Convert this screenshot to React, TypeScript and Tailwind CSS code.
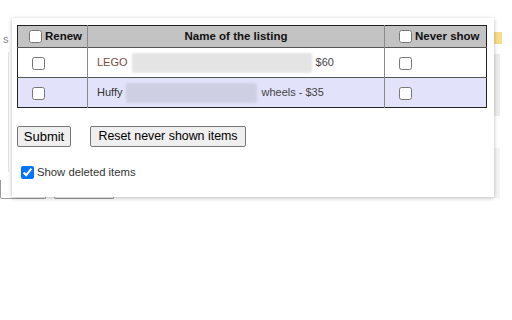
import React from 'react';

type Listing = {
  id: number;
  prefix: string;
  prefixColor: string;
  blurWidth: number;
  blurColor: string;
  suffix: string;
  tint: string;
};

const listings: Listing[] = [
  {
    id: 1,
    prefix: 'LEGO',
    prefixColor: 'text-[#7b4b3f]',
    blurWidth: 180,
    blurColor: 'bg-[#e4e4e4]',
    suffix: '$60',
    tint: 'bg-white',
  },
  {
    id: 2,
    prefix: 'Huffy',
    prefixColor: 'text-[#333333]',
    blurWidth: 131,
    blurColor: 'bg-[#cfcfe3]',
    suffix: 'wheels - $35',
    tint: 'bg-[#e2e2fa]',
  },
];

function Box({ checked = false }: { checked?: boolean }) {
  return (
    <input
      type="checkbox"
      defaultChecked={checked}
      className="m-0 h-[13px] w-[13px] shrink-0 align-middle accent-[#0075ff]"
    />
  );
}

// page behind the popup, only edges of it peek out
function Backdrop() {
  return (
    <>
      <span className="absolute left-[3px] top-[31px] text-[11px] text-[#888]">s</span>
      <div className="absolute left-[8px] top-[52px] h-[120px] w-px bg-[#e2e2e2]" />
      <div className="absolute left-0 top-[180px] h-[19px] w-[46px] rounded-b-[2px] border border-t-0 border-[#9a9a9a]" />
      <div className="absolute left-[54px] top-[180px] h-[19px] w-[60px] rounded-b-[2px] border border-t-0 border-[#9a9a9a]" />
      <div className="absolute left-[494px] top-[32px] h-[12px] w-[8px] bg-[#f7dc8a]" />
      <div className="absolute left-[494px] top-[54px] h-[62px] w-[6px] bg-[#ececec]" />
      <div className="absolute left-[494px] top-[148px] h-[50px] w-[6px] bg-[#f4f4f4]" />
    </>
  );
}

export default function App() {
  return (
    <div className="relative h-[320px] w-[512px] overflow-hidden bg-white font-['Liberation_Sans',Arial,sans-serif]">
      <Backdrop />

      <div className="absolute left-[12px] top-[18px] w-[482px] bg-white px-[5px] pb-[16px] pt-[7px] shadow-[0_1px_4px_rgba(0,0,0,0.28)]">
        <table className="w-[470px] table-fixed border-collapse border border-[#222] text-[11px]">
          <thead>
            <tr className="h-[22px] bg-[#c3c3c3] text-[11.5px] text-[#111]">
              <th className="w-[70px] border-r border-[#8a8a8a] p-0 text-left font-bold">
                <span className="flex items-center gap-[3px] whitespace-nowrap pl-[11px]">
                  <Box />
                  Renew
                </span>
              </th>
              <th className="border-r border-[#8a8a8a] p-0 text-center font-bold">Name of the listing</th>
              <th className="w-[102px] p-0 text-left font-bold">
                <span className="flex items-center gap-[3px] whitespace-nowrap pl-[14px]">
                  <Box />
                  Never show
                </span>
              </th>
            </tr>
          </thead>
          <tbody>
            {listings.map((l) => (
              <tr key={l.id} className={`border-t border-[#555] ${l.tint}`}>
                <td className="h-[30px] border-r border-[#8a8a8a] p-0 pl-[14px]">
                  <Box />
                </td>
                <td className="border-r border-[#8a8a8a] p-0 pl-[9px]">
                  <div className="flex items-center gap-[4px] whitespace-nowrap">
                    <span className={l.prefixColor}>{l.prefix}</span>
                    <span
                      className={`h-[20px] rounded-[2px] blur-[1px] ${l.blurColor}`}
                      style={{ width: l.blurWidth }}
                    />
                    <span className="text-[#444]">{l.suffix}</span>
                  </div>
                </td>
                <td className="p-0 pl-[14px]">
                  <Box />
                </td>
              </tr>
            ))}
          </tbody>
        </table>

        <div className="mt-[18px] flex items-center gap-[19px]">
          <button className="h-[21px] w-[54px] rounded-[2px] border border-[#767676] bg-[#efefef] text-[13px] text-black">
            Submit
          </button>
          <button className="h-[21px] w-[156px] rounded-[2px] border border-[#767676] bg-[#efefef] text-[12.4px] text-black">
            Reset never shown items
          </button>
        </div>

        <label className="mt-[17px] flex items-center gap-[3px] pl-[4px] text-[11.3px] text-[#333]">
          <Box checked />
          Show deleted items
        </label>
      </div>
    </div>
  );
}
